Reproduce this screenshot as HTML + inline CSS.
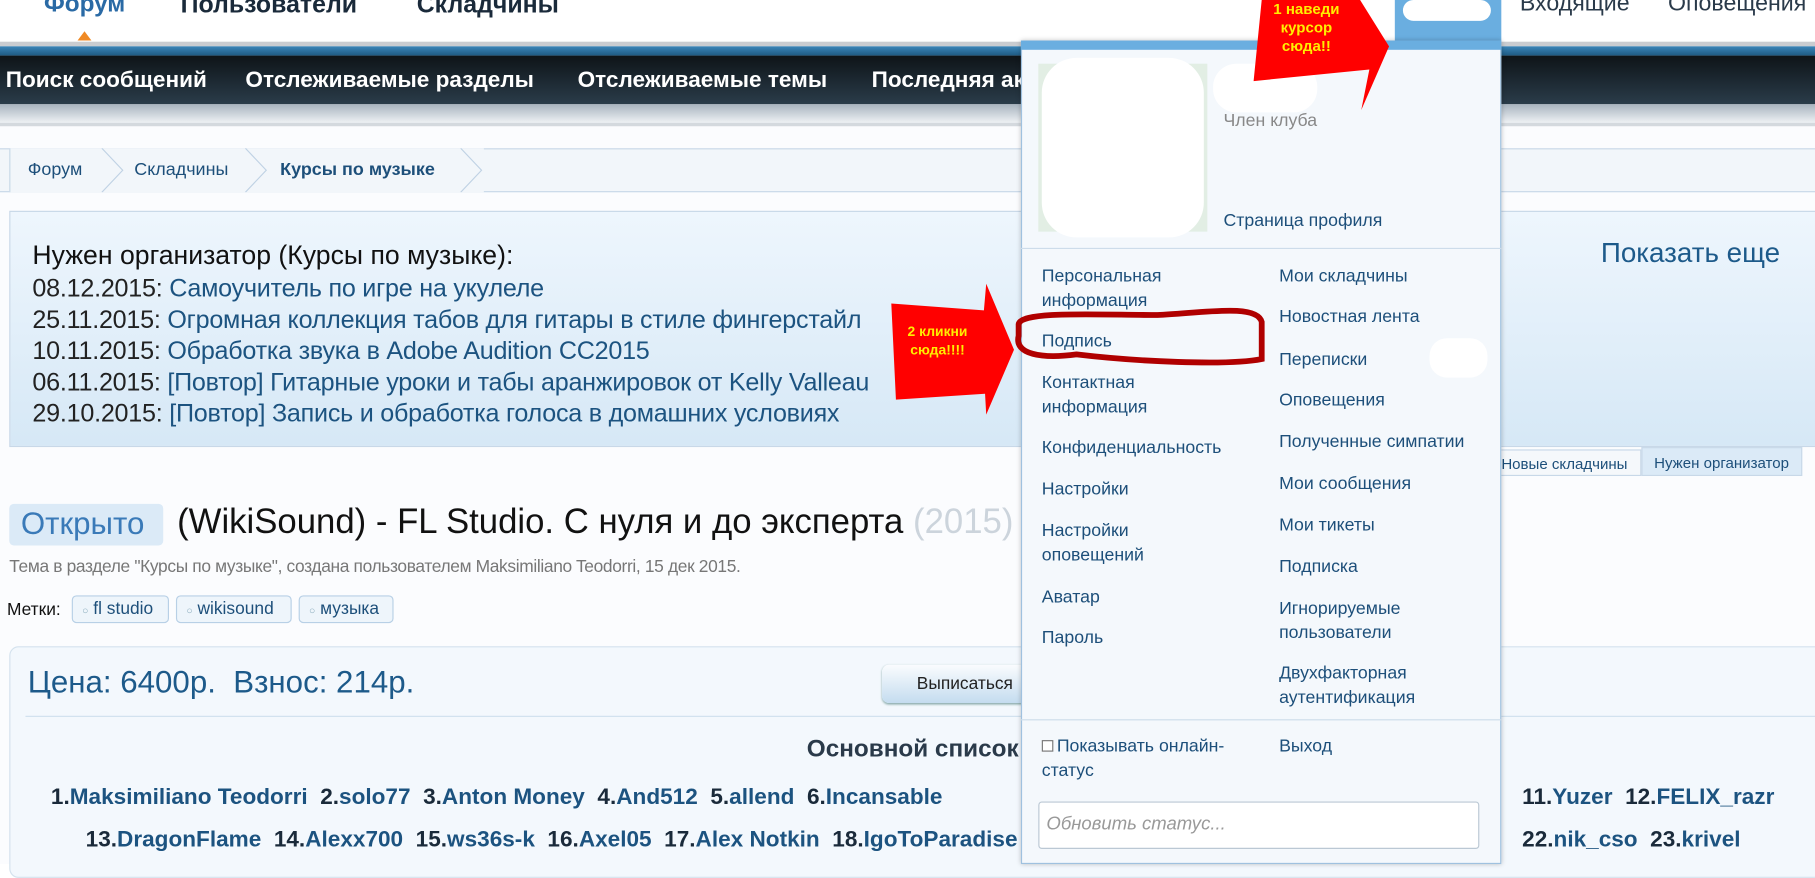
<!DOCTYPE html>
<html><head><meta charset="utf-8">
<style>
*{margin:0;padding:0;box-sizing:border-box}
html,body{width:1815px;height:864px;overflow:hidden;background:#fff}
#w{position:absolute;left:0;top:0;width:1568px;height:746px;transform:scale(1.15753,1.1582);transform-origin:0 0;font-family:"Liberation Sans",Arial,sans-serif;background:#fbfcfe}
.a{position:absolute;white-space:nowrap}
.b{color:#1c5380}
.dd .a{font-size:15.3px;color:#1d4f7a;line-height:21px}
</style></head><body><div id="w">
<div class="a" style="left:0;top:0;width:1568px;height:40px;background:#fff"></div>
<div class="a" style="left:38px;top:-8px;font-size:21px;font-weight:bold;color:#2a6aa5">Форум</div>
<div class="a" style="left:67px;top:27px;width:0;height:0;border-left:6px solid transparent;border-right:6px solid transparent;border-bottom:8px solid #f08a24"></div>
<div class="a" style="left:156px;top:-8px;font-size:21.5px;font-weight:bold;color:#1a2a3a">Пользователи</div>
<div class="a" style="left:360px;top:-8px;font-size:21.5px;font-weight:bold;color:#1a2a3a">Складчины</div>
<div class="a" style="left:1313px;top:-8px;font-size:20px;color:#2a3a4a">Входящие</div>
<div class="a" style="left:1441px;top:-8px;font-size:20px;color:#2a3a4a">Оповещения</div>
<div class="a" style="left:1205px;top:0;width:92px;height:42px;background:#6aaee0"></div>
<div class="a" style="left:1212px;top:0;width:76px;height:18px;background:#fff;border-radius:10px"></div>
<div class="a" style="left:0;top:36px;width:1568px;height:4px;background:#c9ccd0"></div>
<div class="a" style="left:0;top:40px;width:1568px;height:8px;background:linear-gradient(#3a85b8,#1e5a82)"></div>
<div class="a" style="left:0;top:48px;width:1568px;height:42px;background:linear-gradient(#0e1418,#2a3c4a)"></div>
<div class="a" style="left:0;top:90px;width:1568px;height:16px;background:linear-gradient(#a8b4bf,#eef1f4)"></div>
<div class="a" style="left:0;top:106px;width:1568px;height:3px;background:#d4d9de"></div>
<div class="a" style="left:5px;top:58px;font-size:19.5px;font-weight:bold;color:#fff">Поиск сообщений</div>
<div class="a" style="left:212px;top:58px;font-size:19.5px;font-weight:bold;color:#fff">Отслеживаемые разделы</div>
<div class="a" style="left:499px;top:58px;font-size:19.5px;font-weight:bold;color:#fff">Отслеживаемые темы</div>
<div class="a" style="left:753px;top:58px;font-size:19.5px;font-weight:bold;color:#fff">Последняя активность</div>
<div class="a" style="left:0;top:128px;width:1568px;height:38px;background:#f2f6fa;border-top:1px solid #c8d8e8;border-bottom:1px solid #c8d8e8"></div>
<div class="a" style="left:8px;top:128px;width:410px;height:38px;border-left:1px solid #c8d8e8;background:#f2f6fa"></div>
<div class="a" style="left:24px;top:138px;font-size:15.5px;color:#1d4f7a">Форум</div>
<div class="a" style="left:116px;top:138px;font-size:15.5px;color:#1d4f7a">Складчины</div>
<div class="a" style="left:242px;top:138px;font-size:15.5px;font-weight:bold;color:#1d4f7a">Курсы по музыке</div>
<svg class="a" style="left:0;top:128px" width="420" height="38"><g fill="none" stroke="#c0d2e4" stroke-width="1"><path d="M88 0L106 19L88 38M212 0L230 19L212 38M398 0L416 19L398 38"/></g></svg>
<div class="a" style="left:8px;top:182px;width:1570px;height:204px;border:1px solid #c8d8e8;background:linear-gradient(#eef6fd,#d6e8f6)"></div>
<div class="a" style="left:28px;top:207px;font-size:23px;color:#111">Нужен организатор (Курсы по музыке):</div>
<div class="a" style="left:28px;top:235px;font-size:21.7px;color:#222;line-height:27px;letter-spacing:-0.2px">08.12.2015: <span class="b">Самоучитель по игре на укулеле</span><br>25.11.2015: <span class="b">Огромная коллекция табов для гитары в стиле фингерстайл</span><br>10.11.2015: <span class="b">Обработка звука в Adobe Audition CC2015</span><br>06.11.2015: <span class="b">[Повтор] Гитарные уроки и табы аранжировок от Kelly Valleau</span><br>29.10.2015: <span class="b">[Повтор] Запись и обработка голоса в домашних условиях</span></div>
<div class="a" style="left:1383px;top:205px;font-size:24px;color:#1d5a8a">Показать еще</div>
<div class="a" style="left:1290px;top:388px;width:128px;height:23px;border:1px solid #c8d8e8;background:#f5f8fb;font-size:13px;color:#1d4f7a;padding:4px 6px">Новые складчины</div>
<div class="a" style="left:1418px;top:386px;width:139px;height:25px;border:1px solid #c8d8e8;background:#dbeaf7;font-size:13px;color:#1d4f7a;padding:5px 10px">Нужен организатор</div>
<div class="a" style="left:8px;top:435px;width:133px;height:36px;background:#dbeaf7;border-radius:4px"></div>
<div class="a" style="left:18px;top:437px;font-size:27px;color:#3a7ab8">Открыто</div>
<div class="a" style="left:153px;top:434px;font-size:30px;color:#111">(WikiSound) - FL Studio. С нуля и до эксперта <span style="color:#ccd4dc">(2015)</span></div>
<div class="a" style="left:8px;top:481px;font-size:15px;color:#777;letter-spacing:-0.3px">Тема в разделе "Курсы по музыке", создана пользователем Maksimiliano Teodorri, 15 дек 2015.</div>
<div class="a" style="left:6px;top:518px;font-size:15px;color:#111">Метки:</div>
<div class="a" style="left:62px;top:514px;width:84px;height:24px;border:1px solid #b8d0e6;border-radius:4px;background:#eef5fb;font-size:15px;color:#1d4f7a;padding:2px 0 0 8px"><span style="font-size:9px;color:#8ab">○</span> fl studio</div>
<div class="a" style="left:152px;top:514px;width:100px;height:24px;border:1px solid #b8d0e6;border-radius:4px;background:#eef5fb;font-size:15px;color:#1d4f7a;padding:2px 0 0 8px"><span style="font-size:9px;color:#8ab">○</span> wikisound</div>
<div class="a" style="left:258px;top:514px;width:82px;height:24px;border:1px solid #b8d0e6;border-radius:4px;background:#eef5fb;font-size:15px;color:#1d4f7a;padding:2px 0 0 8px"><span style="font-size:9px;color:#8ab">○</span> музыка</div>
<div class="a" style="left:8px;top:558px;width:1570px;height:200px;border:1px solid #d4e2ee;border-radius:8px;background:#f3f8fd"></div>
<div class="a" style="left:24px;top:574px;font-size:27px;color:#1d5a8a">Цена: 6400р.&nbsp; Взнос: 214р.</div>
<div class="a" style="left:762px;top:574px;width:150px;height:33px;border-radius:6px;background:linear-gradient(#fafcfe,#c4dcef);box-shadow:0 1px 2px #8aa;font-size:15px;color:#222;padding:8px 0 0 30px">Выписаться</div>
<div class="a" style="left:22px;top:618px;width:1546px;height:1px;background:#cfe0ee"></div>
<div class="a" style="left:697px;top:635px;font-size:21px;font-weight:bold;color:#2a3a4a">Основной список</div>
<div class="a" style="left:44px;top:677px;font-size:19.5px;font-weight:bold;color:#1a2a3a">1.<span class="b">Maksimiliano Teodorri</span>&nbsp; 2.<span class="b">solo77</span>&nbsp; 3.<span class="b">Anton Money</span>&nbsp; 4.<span class="b">And512</span>&nbsp; 5.<span class="b">allend</span>&nbsp; 6.<span class="b">Incansable</span></div>
<div class="a" style="left:1315px;top:677px;font-size:19.5px;font-weight:bold;color:#1a2a3a">11.<span class="b">Yuzer</span>&nbsp; 12.<span class="b">FELIX_razr</span></div>
<div class="a" style="left:74px;top:714px;font-size:19.5px;font-weight:bold;color:#1a2a3a">13.<span class="b">DragonFlame</span>&nbsp; 14.<span class="b">Alexx700</span>&nbsp; 15.<span class="b">ws36s-k</span>&nbsp; 16.<span class="b">Axel05</span>&nbsp; 17.<span class="b">Alex Notkin</span>&nbsp; 18.<span class="b">IgoToParadise</span></div>
<div class="a" style="left:1315px;top:714px;font-size:19.5px;font-weight:bold;color:#1a2a3a">22.<span class="b">nik_cso</span>&nbsp; 23.<span class="b">krivel</span></div>
<div class="dd">
<div class="a" style="left:882px;top:35px;width:415px;height:711px;background:#f4f8fc;border:1px solid #9fc1df;box-shadow:0 0 4px rgba(0,0,0,.25)"></div>
<div class="a" style="left:882px;top:35px;width:415px;height:8px;background:#6aaee0"></div>
<div class="a" style="left:897px;top:55px;width:146px;height:145px;background:#e2eee4"></div>
<div class="a" style="left:900px;top:50px;width:140px;height:155px;background:#fff;border-radius:30px"></div>
<div class="a" style="left:1048px;top:55px;width:90px;height:42px;background:#fff;border-radius:20px"></div>
<div class="a" style="left:1057px;top:94px;color:#888">Член клуба</div>
<div class="a" style="left:1057px;top:180px">Страница профиля</div>
<div class="a" style="left:882px;top:214px;width:415px;height:1px;background:#cddcea"></div>
<div class="a" style="left:900px;top:228px">Персональная<br>информация</div>
<div class="a" style="left:900px;top:284px">Подпись</div>
<div class="a" style="left:900px;top:320px">Контактная<br>информация</div>
<div class="a" style="left:900px;top:376px">Конфиденциальность</div>
<div class="a" style="left:900px;top:412px">Настройки</div>
<div class="a" style="left:900px;top:448px">Настройки<br>оповещений</div>
<div class="a" style="left:900px;top:505px">Аватар</div>
<div class="a" style="left:900px;top:540px">Пароль</div>
<div class="a" style="left:1105px;top:228px">Мои складчины</div>
<div class="a" style="left:1105px;top:263px">Новостная лента</div>
<div class="a" style="left:1105px;top:300px">Переписки</div>
<div class="a" style="left:1235px;top:292px;width:50px;height:34px;background:#fff;border-radius:15px"></div>
<div class="a" style="left:1105px;top:335px">Оповещения</div>
<div class="a" style="left:1105px;top:371px">Полученные симпатии</div>
<div class="a" style="left:1105px;top:407px">Мои сообщения</div>
<div class="a" style="left:1105px;top:443px">Мои тикеты</div>
<div class="a" style="left:1105px;top:479px">Подписка</div>
<div class="a" style="left:1105px;top:515px">Игнорируемые<br>пользователи</div>
<div class="a" style="left:1105px;top:571px">Двухфакторная<br>аутентификация</div>
<div class="a" style="left:882px;top:621px;width:415px;height:1px;background:#cddcea"></div>
<div class="a" style="left:900px;top:634px"><span style="display:inline-block;width:10px;height:10px;border:1px solid #777;background:#fff;margin-right:3px"></span>Показывать онлайн-<br>статус</div>
<div class="a" style="left:1105px;top:634px">Выход</div>
<div class="a" style="left:897px;top:692px;width:381px;height:41px;background:#fff;border:1px solid #bbc8d4;border-radius:3px;font-style:italic;color:#999;padding:8px 6px;font-size:16px">Обновить статус...</div>
</div>
<svg class="a" style="left:0;top:0" width="1568" height="746">
<polygon points="1090,0 1175,0 1200,40 1176,95 1183,60 1083,70" fill="#ff0000"/>
<polygon points="770,262 850,268 852,245 876,302 852,358 851,340 774,345" fill="#ff0000"/>
<path d="M880 280 C882 268 950 272 1000 272 C1040 270 1086 262 1090 278 L1090 310 C1060 316 980 312 930 306 C900 310 876 306 880 290 Z" fill="none" stroke="#b00000" stroke-width="5"/>
</svg>
<div class="a" style="left:1100px;top:0;font-size:13px;font-weight:bold;color:#ffee00;text-align:center;line-height:16px">1 наведи<br>курсор<br>сюда!!</div>
<div class="a" style="left:784px;top:278px;font-size:12px;font-weight:bold;color:#ffee00;text-align:center;line-height:16px">2 кликни<br>сюда!!!!</div>
</div></body></html>
